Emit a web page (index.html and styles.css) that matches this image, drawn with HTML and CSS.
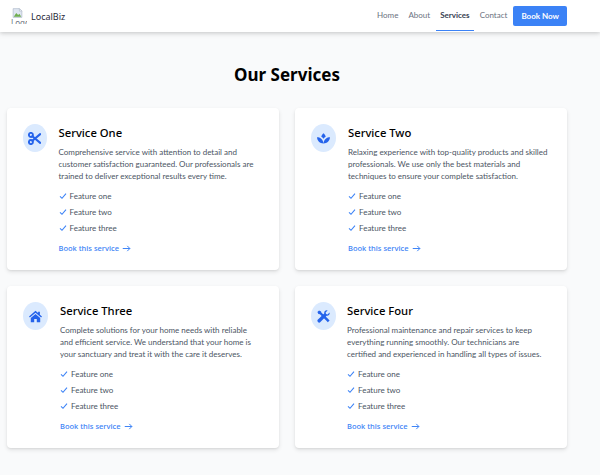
FILE: index.html
```html
<!DOCTYPE html>
<html lang="en">
<head>
<meta charset="UTF-8">
<meta name="viewport" content="width=device-width, initial-scale=1.0">
<title>Our Services - LocalBiz</title>
<link rel="stylesheet" href="styles.css">
</head>
<body>
<header class="navbar">
    <a class="brand" href="#">
        <span class="broken-logo">
            <svg class="broken-icon" viewBox="0 0 16 16">
                <path d="M1 1h10l4 4v10H1z" fill="#dfe6f2" stroke="#a9b4c6"/>
                <path d="M2 14l4-6 3 3 2-2 3 5z" fill="#6fae4f"/>
                <path d="M11 1v4h4z" fill="#fff" stroke="#a9b4c6"/>
            </svg>
            <span class="broken-alt">Logo</span>
        </span>
        <span class="brand-name">LocalBiz</span>
    </a>
    <nav class="nav-links">
        <a href="#">Home</a>
        <a href="#">About</a>
        <a href="#" class="active">Services</a>
        <a href="#">Contact</a>
        <a href="#" class="book-btn">Book Now</a>
    </nav>
</header>

<main class="services">
    <h1>Our Services</h1>
    <div class="service-grid">
        <article class="card">
            <div class="card-icon icon-one">
                <svg viewBox="0 0 16 16">
                    <circle cx="3.600" cy="3.600" r="2.500" fill="none" stroke="currentColor" stroke-width="2.300"/>
                    <circle cx="3.600" cy="12.400" r="2.500" fill="none" stroke="currentColor" stroke-width="2.300"/>
                    <path d="M5.400 5.200L15 13.400M5.400 10.800L15 2.600" stroke="currentColor" stroke-width="2.500" stroke-linecap="round"/>
                </svg>
            </div>
            <div class="card-body">
                <h2>Service One</h2>
                <p>Comprehensive service with attention to detail and customer satisfaction guaranteed. Our professionals are trained to deliver exceptional results every time.</p>
                <ul>
                    <li><svg class="check" viewBox="0 0 12 12"><path d="M1.500 6.500l3 3 6-7"/></svg>Feature one</li>
                    <li><svg class="check" viewBox="0 0 12 12"><path d="M1.500 6.500l3 3 6-7"/></svg>Feature two</li>
                    <li><svg class="check" viewBox="0 0 12 12"><path d="M1.500 6.500l3 3 6-7"/></svg>Feature three</li>
                </ul>
                <a class="book-link" href="#">Book this service <svg class="arrow" viewBox="0 0 12 12"><path d="M1 6h9.500M7 2.500L10.500 6 7 9.500"/></svg></a>
            </div>
        </article>

        <article class="card">
            <div class="card-icon icon-two">
                <svg viewBox="0 0 16 16">
                    <path d="M8 1.500c1.400 1.200 2.500 2.700 2.700 4.400-1 .6-2 1.400-2.700 2.300-.7-.9-1.700-1.700-2.700-2.300C5.500 4.200 6.600 2.700 8 1.500z" fill="currentColor"/>
                    <path d="M0 6.500c3.800 0 7.200 2.300 8 7.500C3.500 14 .3 11.200 0 6.500zM16 6.500c-3.800 0-7.200 2.300-8 7.500 4.500 0 7.700-2.800 8-7.500z" fill="currentColor"/>
                </svg>
            </div>
            <div class="card-body">
                <h2>Service Two</h2>
                <p>Relaxing experience with top-quality products and skilled professionals. We use only the best materials and techniques to ensure your complete satisfaction.</p>
                <ul>
                    <li><svg class="check" viewBox="0 0 12 12"><path d="M1.500 6.500l3 3 6-7"/></svg>Feature one</li>
                    <li><svg class="check" viewBox="0 0 12 12"><path d="M1.500 6.500l3 3 6-7"/></svg>Feature two</li>
                    <li><svg class="check" viewBox="0 0 12 12"><path d="M1.500 6.500l3 3 6-7"/></svg>Feature three</li>
                </ul>
                <a class="book-link" href="#">Book this service <svg class="arrow" viewBox="0 0 12 12"><path d="M1 6h9.500M7 2.500L10.500 6 7 9.500"/></svg></a>
            </div>
        </article>

        <article class="card">
            <div class="card-icon icon-three">
                <svg viewBox="0 0 16 16">
                    <path d="M8 1L0 8l1.100 1.300L8 3.400l6.900 5.900L16 8l-2.600-2.300V2h-2.200v1.800z" fill="currentColor"/>
                    <path d="M8 4.800L2.200 9.700V15h4.200v-4h3.200v4h4.200V9.700z" fill="currentColor"/>
                </svg>
            </div>
            <div class="card-body">
                <h2>Service Three</h2>
                <p>Complete solutions for your home needs with reliable and efficient service. We understand that your home is your sanctuary and treat it with the care it deserves.</p>
                <ul>
                    <li><svg class="check" viewBox="0 0 12 12"><path d="M1.500 6.500l3 3 6-7"/></svg>Feature one</li>
                    <li><svg class="check" viewBox="0 0 12 12"><path d="M1.500 6.500l3 3 6-7"/></svg>Feature two</li>
                    <li><svg class="check" viewBox="0 0 12 12"><path d="M1.500 6.500l3 3 6-7"/></svg>Feature three</li>
                </ul>
                <a class="book-link" href="#">Book this service <svg class="arrow" viewBox="0 0 12 12"><path d="M1 6h9.500M7 2.500L10.500 6 7 9.500"/></svg></a>
            </div>
        </article>

        <article class="card">
            <div class="card-icon icon-four">
                <svg viewBox="0 0 16 16">
                    <path d="M2.500 .5L.5 2.500l1.200 2.500 1.900.3 7.400 7.400 2.300 2.300 2.200-2.200-2.300-2.300L5.300 3.100 5 1.700z" fill="currentColor"/>
                    <path d="M15.400 3l-2.400 2.400-1.900-.5-.5-1.900L13 .6C10.800-.2 8.500 1.600 8.900 4.200L1.200 11.800a2.100 2.100 0 0 0 3 3l7.600-7.700C14.400 7.500 16.200 5.200 15.400 3z" fill="currentColor"/>
                </svg>
            </div>
            <div class="card-body">
                <h2>Service Four</h2>
                <p>Professional maintenance and repair services to keep everything running smoothly. Our technicians are certified and experienced in handling all types of issues.</p>
                <ul>
                    <li><svg class="check" viewBox="0 0 12 12"><path d="M1.500 6.500l3 3 6-7"/></svg>Feature one</li>
                    <li><svg class="check" viewBox="0 0 12 12"><path d="M1.500 6.500l3 3 6-7"/></svg>Feature two</li>
                    <li><svg class="check" viewBox="0 0 12 12"><path d="M1.500 6.500l3 3 6-7"/></svg>Feature three</li>
                </ul>
                <a class="book-link" href="#">Book this service <svg class="arrow" viewBox="0 0 12 12"><path d="M1 6h9.500M7 2.500L10.500 6 7 9.500"/></svg></a>
            </div>
        </article>
    </div>
</main>
</body>
</html>
```

FILE: styles.css
```css
html, body {
    margin: 0;
    padding: 0;
    height: 100%;
}
body {
    font-family: "Noto Sans", Arial, sans-serif;
    background-color: #f9fafb;
    color: #000;
    overflow: hidden;
}
a {
    text-decoration: none;
}

.navbar {
    display: flex;
    justify-content: space-between;
    height: 32px;
    padding: 0 33px 0 11px;
    background-color: #fff;
    box-shadow: 0 1px 4px rgba(0, 0, 0, 0.16), 0 3px 6px rgba(0, 0, 0, 0.05);
}
.brand {
    display: flex;
    align-items: center;
    gap: 4px;
    color: #1f2937;
}
.broken-logo {
    display: block;
    width: 16px;
    height: 16px;
    overflow: hidden;
}
.broken-icon {
    display: block;
    width: 13px;
    height: 10px;
}
.broken-alt {
    display: block;
    font-size: 8px;
    line-height: 9px;
    color: #6b7280;
}
.brand-name {
    font-size: 9px;
    font-weight: 400;
}
.nav-links {
    display: flex;
    align-items: stretch;
    gap: 2px;
}
.nav-links a {
    display: flex;
    align-items: center;
    padding: 0 4px;
    font-family: Lato, sans-serif;
    font-size: 8px;
    color: #6b7280;
    border-bottom: 1px solid transparent;
    height: 30px;
}
.nav-links a.active {
    color: #374151;
    font-weight: 700;
    border-bottom-color: #3b82f6;
}
.nav-links a.book-btn {
    align-self: flex-start;
    height: 20px;
    margin-top: 6px;
    padding: 0 8px;
    font-weight: 700;
    color: #fff;
    background-color: #3b82f6;
    border: none;
    border-radius: 2px;
}

.services {
    padding: 0 33px 0 7px;
}
.services h1 {
    margin: 0;
    padding: 30px 0 21px;
    text-align: center;
    font-size: 17px;
    line-height: 25px;
    font-weight: 700;
}
.service-grid {
    display: grid;
    grid-template-columns: 272px 272px;
    gap: 16px;
}
.card {
    display: flex;
    gap: 12px;
    height: 162px;
    padding: 16px;
    box-sizing: border-box;
    background-color: #fff;
    border-radius: 4px;
    box-shadow: 0 2px 4px rgba(0, 0, 0, 0.1), 0 1px 2px rgba(0, 0, 0, 0.06);
}
.card-icon {
    display: flex;
    align-items: center;
    justify-content: center;
    flex: none;
    height: 28px;
    border-radius: 50%;
    color: #2563eb;
    background-color: #dbeafe;
}
.card-icon svg {
    width: 13px;
    height: 13px;
}
.icon-one {
    width: 23.5px;
}
.icon-two {
    width: 25px;
}
.icon-three {
    width: 25px;
}
.icon-four {
    width: 25px;
    margin-right: -1px;
}
.card-body {
    font-family: Lato, sans-serif;
}
.card-body h2 {
    margin: 0 0 5px;
    font-family: "Noto Sans", sans-serif;
    font-size: 11.25px;
    line-height: 17px;
    font-weight: 500;
}
.card-body p {
    max-width: 201px;
    margin: 0 0 6px;
    font-size: 8px;
    line-height: 12px;
    color: #4b5563;
}
.card-body ul {
    margin: 0 0 6px;
    padding: 0;
    list-style: none;
}
.card-body li {
    display: flex;
    align-items: center;
    gap: 3px;
    height: 16px;
    font-size: 8px;
    color: #4b5563;
}
.check {
    width: 8px;
    height: 8px;
    fill: none;
    stroke: #3b82f6;
    stroke-width: 1.6;
}
.book-link {
    display: flex;
    align-items: center;
    gap: 3px;
    font-family: "Noto Sans", sans-serif;
    font-size: 7.5px;
    line-height: 12px;
    font-weight: 500;
    color: #3b82f6;
}
.arrow {
    width: 9px;
    height: 9px;
    fill: none;
    stroke: #3b82f6;
    stroke-width: 1.300;
}
```
